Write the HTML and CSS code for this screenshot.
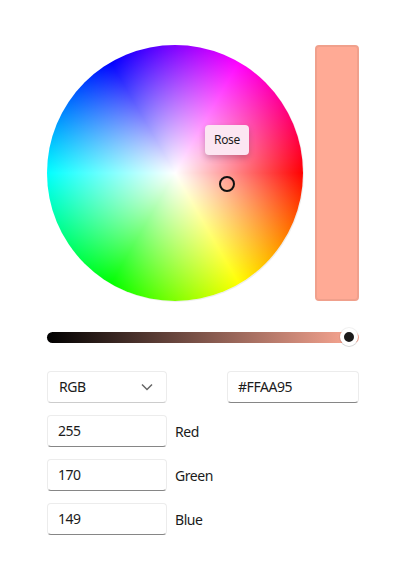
FILE: index.html
```html
<!DOCTYPE html>
<html lang="en">
<head>
<meta charset="utf-8">
<title>Color picker</title>
<link rel="stylesheet" href="styles.css">
</head>
<body>
<main class="picker">
  <div class="spectrum-row">
    <div class="wheel">
      <div class="marker"></div>
      <div class="tooltip">Rose</div>
    </div>
    <div class="preview"></div>
  </div>
  <div class="slider"><div class="thumb"></div></div>
  <div class="mode-row">
    <div class="field select"><span>RGB</span>
      <svg class="chevron" width="12" height="12" viewBox="0 0 12 12"><path d="M1 3.5 6 8.5 11 3.5"/></svg>
    </div>
    <div class="field hex">#FFAA95</div>
  </div>
  <div class="channel"><div class="field">255</div><span class="label">Red</span></div>
  <div class="channel"><div class="field">170</div><span class="label">Green</span></div>
  <div class="channel"><div class="field">149</div><span class="label">Blue</span></div>
</main>
</body>
</html>
```
FILE: styles.css
```css
* { box-sizing: border-box; }
body {
  margin: 0;
  background: #fff;
  color: #1b1b1b;
  font: 14px/20px "Noto Sans", "Open Sans", sans-serif;
  letter-spacing: -0.45px;
}
.picker { width: 312px; margin: 45px 0 0 47px; }
.spectrum-row { display: flex; gap: 12px; }
.wheel {
  position: relative;
  width: 256px;
  height: 256px;
  border-radius: 50%;
  background:
    radial-gradient(circle closest-side, #fff, rgba(255, 255, 255, 0)),
    conic-gradient(from 90deg, #f00, #ff0, #0f0, #0ff, #00f, #f0f, #f00);
  box-shadow: 1px 1px 0.5px rgba(0, 0, 0, 0.07);
}
.marker {
  position: absolute;
  left: 172px;
  top: 131px;
  width: 16px;
  height: 16px;
  border: 2px solid #111;
  border-radius: 50%;
}
.tooltip {
  position: absolute;
  left: 158px;
  top: 80px;
  width: 44px;
  height: 30px;
  border-radius: 4px;
  background: #fce6f2;
  box-shadow: 0 3px 6px rgba(0, 0, 0, 0.2);
  font-size: 12px;
  line-height: 29px;
  letter-spacing: -0.35px;
  text-align: center;
}
.preview {
  width: 44px;
  height: 256px;
  border: 2px solid #f0a08c;
  border-radius: 4px;
  background: #ffaa95;
}
.slider {
  position: relative;
  height: 11px;
  margin-top: 31px;
  border-radius: 5.5px;
  background: linear-gradient(90deg, #000, #ffaa95);
}
.thumb {
  position: absolute;
  left: 293px;
  top: -4px;
  width: 18px;
  height: 18px;
  border: 4px solid #fff;
  border-radius: 50%;
  background: #1b1b1b;
  box-shadow: 0 0 0 1px rgba(0, 0, 0, 0.06), 0 1px 0 rgba(0, 0, 0, 0.1);
}
.mode-row { display: flex; justify-content: space-between; margin-top: 28px; }
.field {
  width: 120px;
  height: 32px;
  padding: 5px 10px;
  border: 1px solid #ececec;
  border-bottom-color: #868686;
  border-radius: 4px;
  background: #fff;
}
.select {
  display: flex;
  justify-content: space-between;
  padding: 5px 13px 5px 11px;
  border-bottom-color: #ccc;
}
.chevron { margin-top: 4px; fill: none; stroke: #666; stroke-width: 1.5; }
.hex { width: 132px; }
.channel { display: flex; gap: 8px; margin-top: 12px; }
.label { padding-top: 7px; }
```
